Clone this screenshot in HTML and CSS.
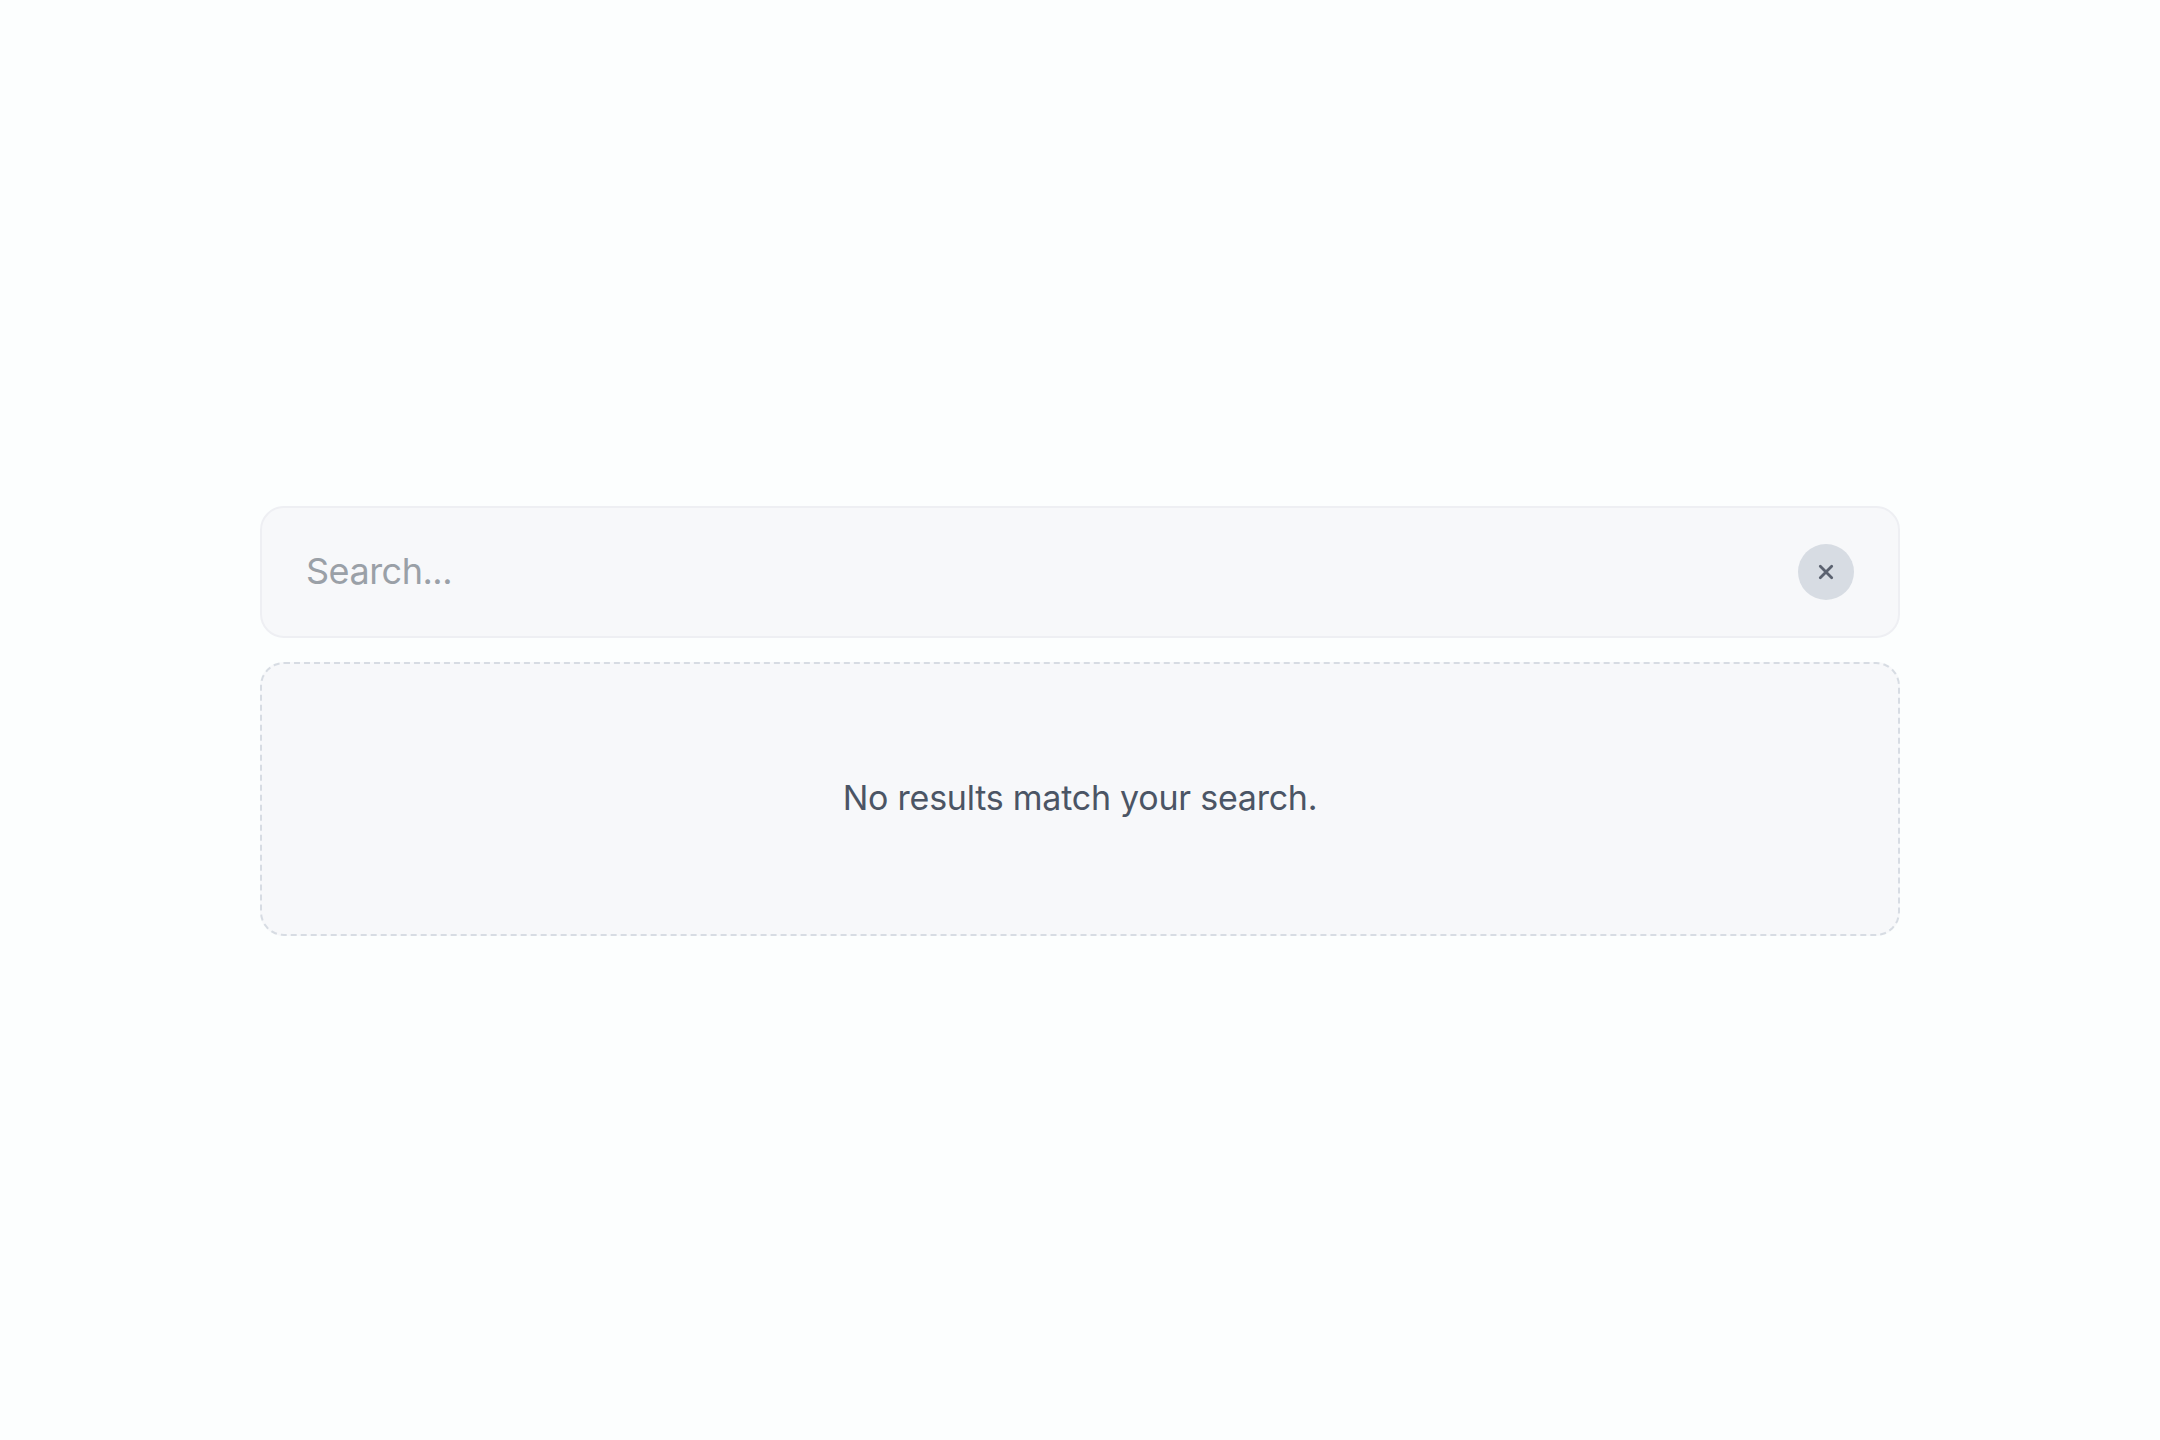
FILE: index.html
```html
<!doctype html>
<html lang="en">
<head>
  <meta charset="UTF-8">
  <title>Search</title>
  <link rel="stylesheet" href="styles.css">
</head>
<body>
  <main class="search">
    <div class="search-box">
      <input class="search-input" type="text" placeholder="Search..." aria-label="Search">
      <button class="search-clear" type="button" aria-label="Clear">
        <svg width="16" height="16" viewBox="0 0 16 16" fill="none" stroke="currentColor" stroke-width="2.8" stroke-linecap="round">
          <path d="M2.3 2.3l11.4 11.4M13.7 2.3L2.3 13.7"/>
        </svg>
      </button>
    </div>
    <div class="search-empty">
      <p class="search-message">No results match your search.</p>
    </div>
  </main>
</body>
</html>
```

FILE: styles.css
```css
* {
  box-sizing: border-box;
}

body {
  margin: 0;
  height: 1440px;
  display: flex;
  justify-content: center;
  align-items: center;
  background: #fcfefe;
  font-family: Inter, "Liberation Sans", sans-serif;
}

.search {
  width: 1640px;
  display: flex;
  flex-direction: column;
  gap: 24px;
  margin-top: 2px;
}

.search-box {
  height: 132px;
  padding: 0 44px;
  display: flex;
  align-items: center;
  border: 2px solid #eeeff3;
  border-radius: 24px;
  background: #f7f8fa;
}

.search-input {
  flex: 1;
  min-width: 0;
  padding: 0 0 2px;
  border: 0;
  outline: 0;
  background: none;
  color: #4b5565;
  font: inherit;
  font-size: 36px;
  letter-spacing: -0.5px;
}

.search-input::placeholder {
  color: #9aa0a7;
}

.search-clear {
  width: 56px;
  height: 56px;
  padding: 0;
  display: flex;
  justify-content: center;
  align-items: center;
  border: 0;
  border-radius: 50%;
  background: #d7dce3;
  color: #5b6270;
}

.search-empty {
  height: 274px;
  padding-bottom: 4px;
  display: flex;
  justify-content: center;
  align-items: center;
  border: 2px dashed #d7dce3;
  border-radius: 24px;
  background: #f7f8fa;
}

.search-message {
  margin: 0;
  color: #4b5565;
  font-size: 34px;
  letter-spacing: -0.24px;
}
```
